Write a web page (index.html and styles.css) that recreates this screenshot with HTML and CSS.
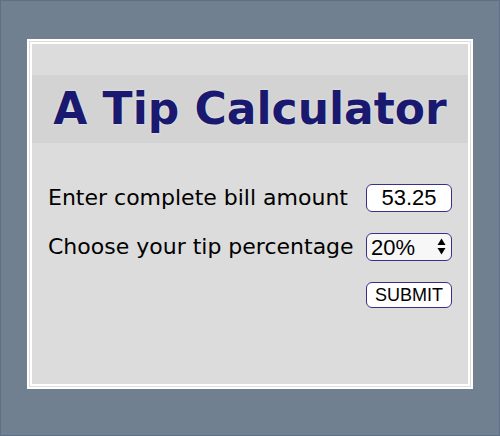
FILE: index.html
```html
<!DOCTYPE html>
<html lang="en">
<head>
<meta charset="utf-8">
<title>A Tip Calculator</title>
<link rel="stylesheet" href="styles.css">
</head>
<body>
  <main class="card">
    <h1 class="title">A Tip Calculator</h1>
    <form class="form">
      <div class="row">
        <label class="label" for="bill">Enter complete bill amount</label>
        <input class="control input" id="bill" type="text" value="53.25">
      </div>
      <div class="row">
        <label class="label" for="tip">Choose your tip percentage</label>
        <span class="select-wrap">
          <select class="control select" id="tip">
            <option>10%</option>
            <option>15%</option>
            <option selected>20%</option>
            <option>25%</option>
          </select>
          <svg class="arrows" width="9" height="17" viewBox="0 0 9 17" aria-hidden="true">
            <path d="M4.5 0.5 L8.5 7 L0.5 7 Z" fill="#000"/>
            <path d="M0.5 10 L8.5 10 L4.5 16.5 Z" fill="#000"/>
          </svg>
        </span>
      </div>
      <div class="row row-end">
        <button class="control button" type="button">SUBMIT</button>
      </div>
    </form>
  </main>
</body>
</html>
```
FILE: styles.css
```css
html, body {
  margin: 0;
  padding: 0;
}

body {
  background: #708090;
  box-sizing: border-box;
  width: 500px;
  height: 436px;
  border: 1px solid #5f6f86;
  padding: 38px 26px;
  font-family: "DejaVu Sans", Verdana, sans-serif;
}

.card {
  box-sizing: border-box;
  width: 446px;
  height: 350px;
  border: 5px double #ffffff;
  background: #dcdcdc;
}

.title {
  margin: 31px 0 0;
  background: #d3d3d3;
  height: 68px;
  line-height: 68px;
  text-align: center;
  font-family: "DejaVu Sans", Verdana, sans-serif;
  font-weight: bold;
  font-size: 44px;
  color: #191970;
  text-shadow: 0 0 2px #f4f4f4;
}

.form {
  display: flex;
  flex-direction: column;
  gap: 21px;
  margin-top: 41px;
  padding: 0 16px 0 16px;
}

.row {
  display: flex;
  align-items: center;
  justify-content: space-between;
}

.row-end {
  justify-content: flex-end;
}

.label {
  font-size: 22px;
  color: #000;
  line-height: 28px;
}

.control {
  box-sizing: border-box;
  width: 86px;
  height: 28px;
  border: 1.5px solid #3b3086;
  border-radius: 6px;
  background: #ffffff;
  color: #000;
  font-family: "Liberation Sans", Arial, sans-serif;
  margin: 0;
  outline: none;
}

.input {
  font-size: 22px;
  text-align: center;
  padding: 0 4px;
}

.select-wrap {
  position: relative;
  display: block;
  width: 86px;
  height: 28px;
}

.select {
  -webkit-appearance: none;
  appearance: none;
  font-size: 22px;
  padding: 0 0 0 4px;
  background: #f7f7f7;
  line-height: 25px;
}

.arrows {
  position: absolute;
  right: 6px;
  top: 5px;
  pointer-events: none;
}

.button {
  font-size: 18px;
  padding: 0;
  cursor: pointer;
  height: 26px;
}
```
